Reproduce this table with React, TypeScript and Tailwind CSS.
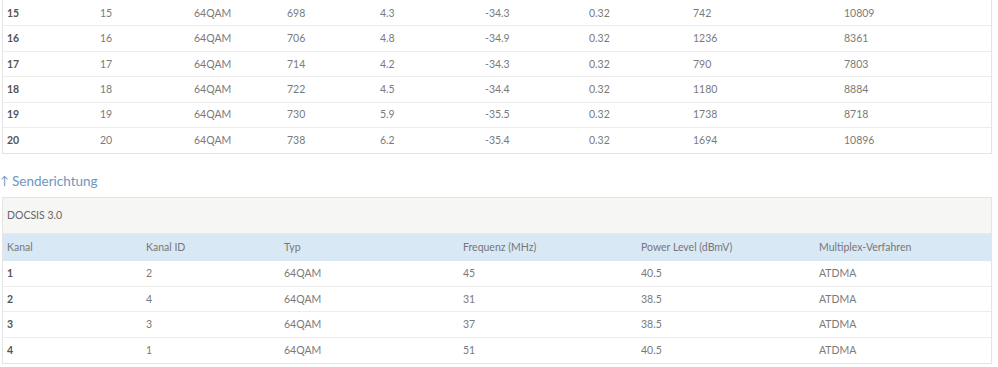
const down = [
  ["15", "15", "64QAM", "698", "4.3", "-34.3", "0.32", "742", "10809"],
  ["16", "16", "64QAM", "706", "4.8", "-34.9", "0.32", "1236", "8361"],
  ["17", "17", "64QAM", "714", "4.2", "-34.3", "0.32", "790", "7803"],
  ["18", "18", "64QAM", "722", "4.5", "-34.4", "0.32", "1180", "8884"],
  ["19", "19", "64QAM", "730", "5.9", "-35.5", "0.32", "1738", "8718"],
  ["20", "20", "64QAM", "738", "6.2", "-35.4", "0.32", "1694", "10896"],
];

const up = [
  ["1", "2", "64QAM", "45", "40.5", "ATDMA"],
  ["2", "4", "64QAM", "31", "38.5", "ATDMA"],
  ["3", "3", "64QAM", "37", "38.5", "ATDMA"],
  ["4", "1", "64QAM", "51", "40.5", "ATDMA"],
];

const upHead = ["Kanal", "Kanal ID", "Typ", "Frequenz (MHz)", "Power Level (dBmV)", "Multiplex-Verfahren"];

const downCols = "grid grid-cols-[93px_94px_93px_93px_105px_104px_104px_151px_1fr]";
const upCols = "grid grid-cols-[139px_138px_179px_178px_178px_1fr]";

export default function App() {
  return (
    <div
      className="w-[998px] h-[367px] bg-white overflow-hidden text-[10.5px] text-[#7a7a7a]"
      style={{ fontFamily: "Lato, 'Open Sans', sans-serif" }}
    >
      <div className="ml-[2px] w-[990px] pt-[1px] border-x border-b border-[#e4e4e4]">
        {down.map((row) => (
          <div key={row[0]} className={`${downCols} h-[25.4px] items-center border-b border-[#ededed] last:border-b-0`}>
            {row.map((cell, i) => (
              <div key={i} className={i === 0 ? "pl-[4px] pt-[1px] font-bold text-[#555]" : "pl-[4px] pt-[1px]"}>
                {cell}
              </div>
            ))}
          </div>
        ))}
      </div>

      <h3 className="mt-[16px] h-[22px] flex items-center text-[13.5px] text-[#6a97bf] leading-none">
        <span className="mr-[3px] text-[12px]">↑</span>Senderichtung
      </h3>

      <div className="mt-[5px] ml-[2px] w-[990px] border border-[#e4e4e4]">
        <div className="h-[36px] flex items-center pl-[4px] bg-[#f6f6f4] text-[#666] border-b border-[#e8e8e8]">
          DOCSIS 3.0
        </div>
        <div className={`${upCols} h-[27px] items-center bg-[#d9e8f5] text-[#777]`}>
          {upHead.map((h) => (
            <div key={h} className="pl-[4px]">{h}</div>
          ))}
        </div>
        {up.map((row) => (
          <div key={row[0]} className={`${upCols} h-[25.4px] items-center border-b border-[#ededed] last:border-b-0`}>
            {row.map((cell, i) => (
              <div key={i} className={i === 0 ? "pl-[4px] pt-[1px] font-bold text-[#555]" : "pl-[4px] pt-[1px]"}>
                {cell}
              </div>
            ))}
          </div>
        ))}
      </div>
    </div>
  );
}
